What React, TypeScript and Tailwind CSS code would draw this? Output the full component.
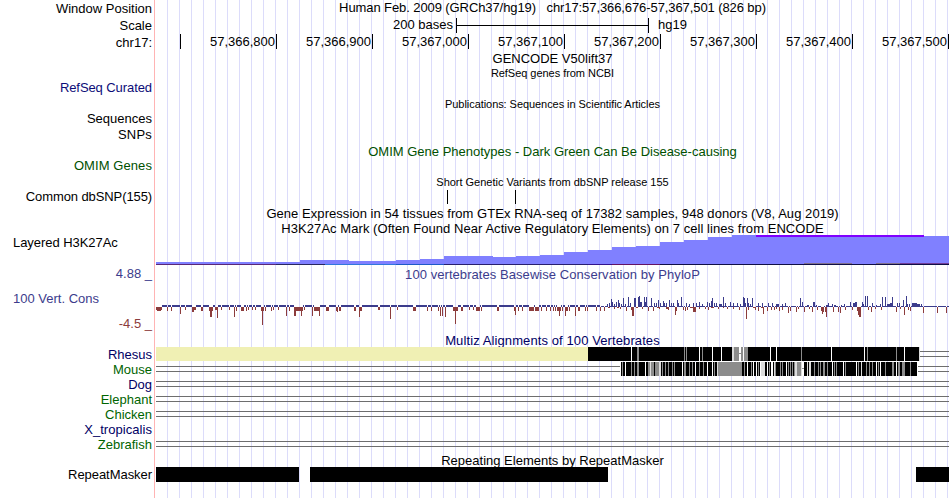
/**
 * Genome browser track view
 */

import React from 'react';

// x coordinate of the first base column; every x below is in image space
const DATA_LEFT = 156;
const DATA_WIDTH = 793;

interface Label {
  text: string;
  className: string;
}

const LABELS: Label[] = [
  { text: 'Window Position', className: 'mt-px text-right' },
  { text: 'Scale', className: 'mt-0.5 text-right' },
  { text: 'chr17:', className: 'mt-0.5 text-right' },
  { text: 'RefSeq Curated', className: 'mt-[30px] text-right tracking-[-0.08px] text-[#0c0c78]' },
  { text: 'Sequences', className: 'mt-4 text-right' },
  { text: 'SNPs', className: 'mt-px text-right tracking-[0.2px]' },
  { text: 'OMIM Genes', className: 'mt-4 text-right tracking-[0.08px] text-[#005000]' },
  { text: 'Common dbSNP(155)', className: 'mt-4 text-right tracking-[-0.1px]' },
  { text: 'Layered H3K27Ac', className: 'mt-[31px] pl-[13px] tracking-[-0.05px]' },
  { text: '4.88 _', className: 'mt-4 text-right text-[#3c3c8c]' },
  { text: '100 Vert. Cons', className: 'mt-2.5 pl-[13px] text-[#3c3c8c]' },
  { text: '-4.5 _', className: 'mt-2.5 text-right text-[#8c3c3c]' },
  { text: 'Rhesus', className: 'mt-4 text-right text-[#000064]' },
  { text: 'Mouse', className: 'text-right text-[#006400]' },
  { text: 'Dog', className: 'text-right text-[#000064]' },
  { text: 'Elephant', className: 'text-right text-[#006400]' },
  { text: 'Chicken', className: 'text-right text-[#006400]' },
  { text: 'X_tropicalis', className: 'text-right tracking-[0.05px] text-[#000064]' },
  { text: 'Zebrafish', className: 'text-right text-[#006400]' },
  { text: 'RepeatMasker', className: 'mt-[15px] text-right tracking-[-0.05px]' },
];

const POSITIONS = [
  '57,366,800', '57,366,900', '57,367,000', '57,367,100',
  '57,367,200', '57,367,300', '57,367,400', '57,367,500',
];

// [x, top]
const H3K27AC: number[][] = [
  [156, 262], [300, 260], [349, 261], [396, 260], [420, 259], [444, 256], [493, 257],
  [516, 256], [540, 255], [564, 252], [588, 250], [612, 247], [636, 246], [660, 242],
  [684, 240], [708, 237], [732, 235], [924, 236], [949, 236],
];

// [x, end, colour]
const H3K27AC_BASE: [number, number, string][] = [
  [156, 276, '#5a2878'], [276, 325, '#282860'], [325, 396, '#3278dc'], [396, 444, '#1e5ac8'],
  [444, 588, '#28206e'], [588, 612, '#32148c'], [612, 660, '#641464'], [660, 949, '#0f0f46'],
];

// [x, width, depth]
const NEGATIVE: number[][] = [
  [156, 6, 3], [157, 4, 4], [167, 1, 4], [171, 1, 4], [180, 1, 7], [185, 1, 3], [192, 4, 3], [192, 2, 5],
  [201, 2, 4], [209, 4, 4], [210, 2, 10], [215, 3, 3], [217, 1, 11], [221, 1, 3], [229, 1, 3], [234, 1, 10],
  [236, 1, 4], [241, 3, 4], [246, 1, 4], [248, 1, 3], [252, 1, 3], [255, 1, 3], [261, 3, 4], [262, 1, 18],
  [265, 1, 4], [271, 1, 4], [273, 1, 3], [278, 1, 3], [286, 1, 9], [289, 1, 4], [294, 9, 4], [294, 2, 9],
  [301, 1, 9], [304, 1, 3], [312, 1, 9], [314, 5, 4], [319, 1, 9], [326, 3, 4], [336, 2, 4], [337, 1, 5],
  [339, 2, 4], [354, 2, 4], [359, 1, 10], [360, 2, 4], [378, 2, 3], [390, 1, 12], [397, 1, 3], [413, 3, 4],
  [427, 1, 4], [431, 1, 4], [438, 1, 4], [440, 1, 9], [442, 1, 9], [445, 1, 10], [453, 5, 4], [455, 1, 17],
  [461, 2, 4], [469, 1, 3], [473, 1, 3], [476, 4, 4], [481, 1, 4], [497, 2, 4], [514, 2, 4], [515, 1, 8],
  [518, 1, 4], [522, 1, 4], [529, 5, 4], [535, 4, 4], [541, 1, 4], [546, 1, 4], [550, 1, 4], [553, 1, 4],
  [555, 1, 4], [557, 4, 4], [559, 1, 9], [562, 1, 4], [565, 1, 9], [566, 2, 4], [569, 1, 4], [575, 1, 9],
  [578, 2, 4], [585, 1, 4], [587, 1, 4], [596, 1, 4], [600, 1, 4], [604, 1, 4], [608, 2, 1], [614, 1, 2],
  [617, 2, 1], [620, 1, 2], [626, 1, 4], [631, 1, 3], [632, 2, 9], [636, 2, 1], [642, 1, 2], [648, 1, 4],
  [653, 1, 4], [657, 2, 1], [659, 1, 2], [666, 3, 2], [668, 1, 3], [675, 1, 8], [676, 1, 4], [683, 1, 3],
  [685, 1, 4], [687, 1, 3], [690, 3, 1], [693, 3, 5], [699, 1, 2], [705, 1, 2], [708, 1, 3], [711, 3, 1],
  [718, 1, 2], [723, 1, 1], [727, 1, 2], [733, 1, 2], [739, 1, 3], [746, 1, 12], [748, 1, 3], [753, 3, 1],
  [755, 1, 3], [758, 1, 4], [761, 3, 1], [763, 1, 7], [767, 1, 4], [771, 1, 3], [774, 1, 3], [776, 1, 2],
  [779, 1, 4], [782, 1, 3], [788, 1, 6], [790, 1, 4], [796, 1, 5], [798, 1, 2], [804, 1, 5], [809, 1, 2],
  [812, 1, 5], [817, 1, 3], [821, 1, 4], [822, 1, 7], [823, 1, 5], [825, 1, 5], [826, 1, 10], [833, 1, 5],
  [838, 1, 5], [840, 1, 6], [845, 1, 3], [852, 1, 3], [857, 1, 4], [858, 1, 8], [859, 2, 10], [868, 1, 3],
  [871, 1, 5], [875, 1, 2], [881, 1, 3], [896, 1, 5], [900, 1, 2], [904, 1, 8], [908, 1, 3], [910, 1, 4],
  [923, 1, 6], [937, 1, 6], [946, 1, 6],
];

// [x, width, height]
const POSITIVE: number[][] = [
  [607, 1, 3], [609, 1, 4], [611, 1, 8], [612, 1, 5], [614, 1, 3], [616, 1, 5], [618, 1, 7], [619, 1, 4],
  [621, 1, 3], [623, 1, 9], [625, 1, 3], [628, 1, 10], [630, 1, 4], [634, 2, 9], [638, 1, 10], [639, 1, 11],
  [640, 2, 5], [644, 1, 10], [645, 1, 5], [646, 1, 10], [651, 1, 9], [654, 1, 4], [656, 1, 4], [658, 1, 7],
  [660, 1, 4], [663, 1, 6], [664, 1, 4], [666, 1, 4], [669, 1, 7], [671, 1, 4], [673, 1, 4], [677, 1, 7],
  [678, 1, 4], [681, 1, 10], [686, 1, 4], [689, 1, 3], [693, 1, 4], [696, 1, 4], [699, 1, 5], [702, 1, 3],
  [707, 1, 5], [709, 1, 4], [711, 1, 6], [712, 1, 9], [714, 1, 4], [716, 1, 4], [719, 3, 3], [723, 1, 10],
  [725, 1, 4], [730, 1, 5], [733, 1, 4], [737, 1, 4], [740, 1, 3], [743, 1, 10], [744, 1, 9], [745, 1, 4],
  [747, 1, 9], [748, 1, 4], [750, 1, 3], [752, 1, 9], [758, 1, 4], [762, 1, 4], [768, 1, 4], [772, 1, 4],
  [776, 3, 3], [782, 1, 3], [785, 1, 4], [800, 1, 9], [802, 1, 5], [807, 2, 2], [813, 2, 5], [816, 1, 2],
  [826, 2, 2], [828, 1, 4], [832, 1, 3], [834, 2, 2], [841, 1, 2], [844, 1, 3], [850, 1, 5], [853, 4, 4],
  [855, 2, 5], [862, 1, 5], [863, 1, 3], [865, 1, 11], [867, 1, 11], [872, 1, 4], [876, 1, 2], [880, 1, 3],
  [882, 1, 10], [885, 1, 10], [887, 4, 3], [890, 3, 4], [892, 1, 10], [897, 1, 4], [899, 1, 4], [903, 1, 7],
  [906, 1, 11], [907, 1, 3], [909, 1, 3], [912, 5, 4], [917, 3, 3], [921, 1, 3],
];

const W = '#ffffff';
const G = '#8c8c8c';
const L = '#dcdcdc';

type Stripe = [number, number, string];

const RHESUS: Stripe[] = [
  [631, 1, W], [637, 2, G], [684, 1, G], [686, 1, G], [699, 1, W], [702, 1, G], [712, 1, W], [721, 1, W],
  [732, 2, L], [734, 5, G], [739, 2, W], [741, 2, G], [743, 1, W], [744, 4, G], [770, 1, W], [776, 1, W],
  [801, 1, G], [831, 1, W], [864, 1, W], [867, 1, G], [896, 1, G], [904, 1, W],
];

const MOUSE: Stripe[] = [
  [622, 1, G], [625, 1, W], [631, 1, G], [634, 1, G], [637, 2, G], [645, 1, W], [648, 2, G], [650, 1, L],
  [651, 3, G], [655, 4, G], [659, 2, L], [662, 1, G], [665, 1, G], [668, 1, G], [672, 1, G], [674, 1, G],
  [682, 1, W], [684, 2, G], [689, 1, G], [692, 1, G], [695, 1, W], [699, 1, G], [703, 1, G], [707, 1, W],
  [712, 1, W], [714, 1, G], [717, 1, L], [718, 24, G], [744, 1, G], [747, 1, W], [751, 1, G], [753, 1, W],
  [756, 1, W], [758, 1, G], [760, 1, W], [761, 4, L], [767, 1, W], [769, 1, G], [771, 2, W], [774, 1, L],
  [775, 1, G], [780, 1, G], [782, 1, G], [786, 1, W], [788, 1, G], [790, 1, G], [792, 1, G], [794, 1, G],
  [795, 2, L], [797, 2, G], [799, 2, G], [801, 1, L], [802, 2, W], [807, 1, L], [809, 2, L], [814, 1, G],
  [818, 1, G], [820, 1, G], [823, 2, G], [827, 1, G], [832, 1, W], [834, 1, G], [836, 1, G], [843, 1, W],
  [845, 1, G], [856, 1, W], [858, 1, G], [861, 1, L], [866, 1, G], [869, 1, G], [872, 1, G], [876, 1, W],
  [878, 1, G], [880, 1, W], [885, 1, G], [892, 2, G], [896, 1, W], [898, 2, G], [902, 3, G], [910, 1, G],
];

interface TrackProps {
  top: number;
  height: number;
  className?: string;
  children?: React.ReactNode;
}

const Track: React.FC<TrackProps> = ({ top, height, className = '', children }) => (
  <svg
    className={`block shrink-0 ${className}`}
    width={DATA_WIDTH}
    height={height}
    viewBox={`${DATA_LEFT} ${top} ${DATA_WIDTH} ${height}`}
    shapeRendering="crispEdges"
  >
    {children}
  </svg>
);

interface TitleProps {
  className?: string;
  children: React.ReactNode;
}

const Title: React.FC<TitleProps> = ({ className = '', children }) => (
  <div className={`h-[15px] shrink-0 text-center whitespace-pre ${className}`}>{children}</div>
);

// Pair of thin lines for a region without aligned sequence
const Gap: React.FC<{ y: number; from?: number; to?: number }> = ({ y, from = 156, to = 949 }) => (
  <>
    <rect x={from} y={y} width={to - from} height={1} fill="#6e6e6e" />
    <rect x={from} y={y + 5} width={to - from} height={1} fill="#6e6e6e" />
  </>
);

const HistoneTrack = () => (
  <Track top={235} height={30}>
    {H3K27AC.slice(0, -1).map(([x, top], i) => (
      <rect key={x} x={x} y={top} width={H3K27AC[i + 1][0] - x} height={264 - top} fill="#8080ff" />
    ))}
    <rect x={756} y={235} width={168} height={2} fill="#8000ff" />
    {H3K27AC_BASE.map(([x, end, fill]) => (
      <rect key={x} x={x} y={264} width={end - x} height={1} fill={fill} />
    ))}
    <rect x={804} y={263} width={48} height={1} fill="#80708c" />
    <rect x={876} y={263} width={24} height={1} fill="#80708c" />
    <rect x={900} y={263} width={49} height={1} fill="#703c96" />
  </Track>
);

const ConservationTrack = () => {
  const negative = new Set<number>();
  NEGATIVE.forEach(([x, w]) => {
    for (let i = 0; i < w; i++) negative.add(x + i);
  });
  const columns = Array.from({ length: DATA_WIDTH }, (_, i) => DATA_LEFT + i);
  return (
    <Track top={290} height={40} className="mt-2">
      {columns.filter((x) => !negative.has(x)).map((x) => (
        <rect key={x} x={x} y={x < 600 ? 305 : 306} width={1} height={x < 600 ? 2 : 1} fill="#3c3c8c" />
      ))}
      {POSITIVE.map(([x, w, h]) => (
        <rect key={x} x={x} y={307 - h} width={w} height={h} fill="#3c3c8c" />
      ))}
      {NEGATIVE.map(([x, w, h], i) => (
        <rect key={i} x={x} y={307} width={w} height={h} fill="#8c3c3c" />
      ))}
    </Track>
  );
};

const AlignmentTrack = () => (
  <Track top={347} height={105}>
    <rect x={156} y={347} width={432} height={14} fill="#f0f0b4" />
    <rect x={588} y={347} width={331} height={14} fill="#000000" />
    {RHESUS.map(([x, w, fill]) => (
      <rect key={x} x={x} y={347} width={w} height={14} fill={fill} />
    ))}
    <rect x={739} y={353} width={2} height={1} fill={G} />
    <rect x={919} y={347} width={1} height={14} fill={L} />
    <Gap y={351} from={920} />

    <Gap y={366} to={620} />
    <rect x={620} y={362} width={1} height={14} fill="#ffffff" />
    <rect x={621} y={362} width={296} height={14} fill="#000000" />
    {MOUSE.map(([x, w, fill]) => (
      <rect key={x} x={x} y={362} width={w} height={14} fill={fill} />
    ))}
    <rect x={802} y={368} width={2} height={1} fill={G} />
    <Gap y={366} from={918} />

    <Gap y={381} />
    <Gap y={396} />
    <Gap y={411} />
    <Gap y={441} />
  </Track>
);

export default function App() {
  return (
    <div className="flex h-[498px] w-[950px] overflow-hidden bg-white font-['Liberation_Sans',sans-serif] text-[13px] leading-[15px] text-black">
      <div className="flex w-[155px] shrink-0 flex-col border-r border-[#ffb4b4] pr-0.5">
        {LABELS.map((label) => (
          <div key={label.text} className={`h-[15px] shrink-0 whitespace-pre ${label.className}`}>
            {label.text}
          </div>
        ))}
      </div>

      <div className="ml-px flex w-[793px] shrink-0 flex-col bg-[linear-gradient(to_right,#dcdcfa_1px,transparent_1px)] bg-[length:12px_100%] bg-[position:11px_0]">
        <Title className="tracking-[-0.09px]">{'Human Feb. 2009 (GRCh37/hg19)   chr17:57,366,676-57,367,501 (826 bp)'}</Title>

        <div className="mt-0.5 flex h-4 shrink-0">
          <span className="w-[297px] text-right">200 bases</span>
          <span className="mt-px ml-[3px] flex h-[15px] w-[193px] items-center border-x border-black">
            <span className="-mt-px h-px w-full bg-black" />
          </span>
          <span className="ml-[9px]">hg19</span>
        </div>

        <div className="mt-px flex h-[15px] shrink-0">
          <span className="w-[25px] border-r border-black" />
          {POSITIONS.map((position) => (
            <span key={position} className="w-24 border-r border-black pr-px text-right leading-4">
              {position}
            </span>
          ))}
        </div>

        <Title className="mt-0.5">GENCODE V50lift37</Title>
        <Title className="text-[11px] tracking-[-0.04px]">RefSeq genes from NCBI</Title>
        <Title className="mt-4 text-[11px] tracking-[-0.06px]">Publications: Sequences in Scientific Articles</Title>
        <Title className="mt-8 text-[#005000]">OMIM Gene Phenotypes - Dark Green Can Be Disease-causing</Title>
        <Title className="mt-4 text-[11px] tracking-[-0.02px]">Short Genetic Variants from dbSNP release 155</Title>

        <Track top={190} height={14}>
          <rect x={447} y={190} width={1} height={14} />
          <rect x={515} y={190} width={1} height={14} />
        </Track>

        <Title className="mt-0.5 tracking-[0.055px]">Gene Expression in 54 tissues from GTEx RNA-seq of 17382 samples, 948 donors (V8, Aug 2019)</Title>
        <Title className="-mb-px tracking-[0.055px]">H3K27Ac Mark (Often Found Near Active Regulatory Elements) on 7 cell lines from ENCODE</Title>
        <HistoneTrack />

        <Title className="mt-0.5 tracking-[0.06px] text-[#3c3c8c]">100 vertebrates Basewise Conservation by PhyloP</Title>
        <ConservationTrack />

        <Title className="mt-[3px] -mb-px tracking-[0.1px] text-[#000064]">Multiz Alignments of 100 Vertebrates</Title>
        <AlignmentTrack />

        <Title className="mt-px -mb-px">Repeating Elements by RepeatMasker</Title>
        <Track top={467} height={15}>
          <rect x={156} y={467} width={143} height={15} />
          <rect x={310} y={467} width={298} height={15} />
          <rect x={916} y={467} width={33} height={15} />
        </Track>
      </div>
    </div>
  );
}
